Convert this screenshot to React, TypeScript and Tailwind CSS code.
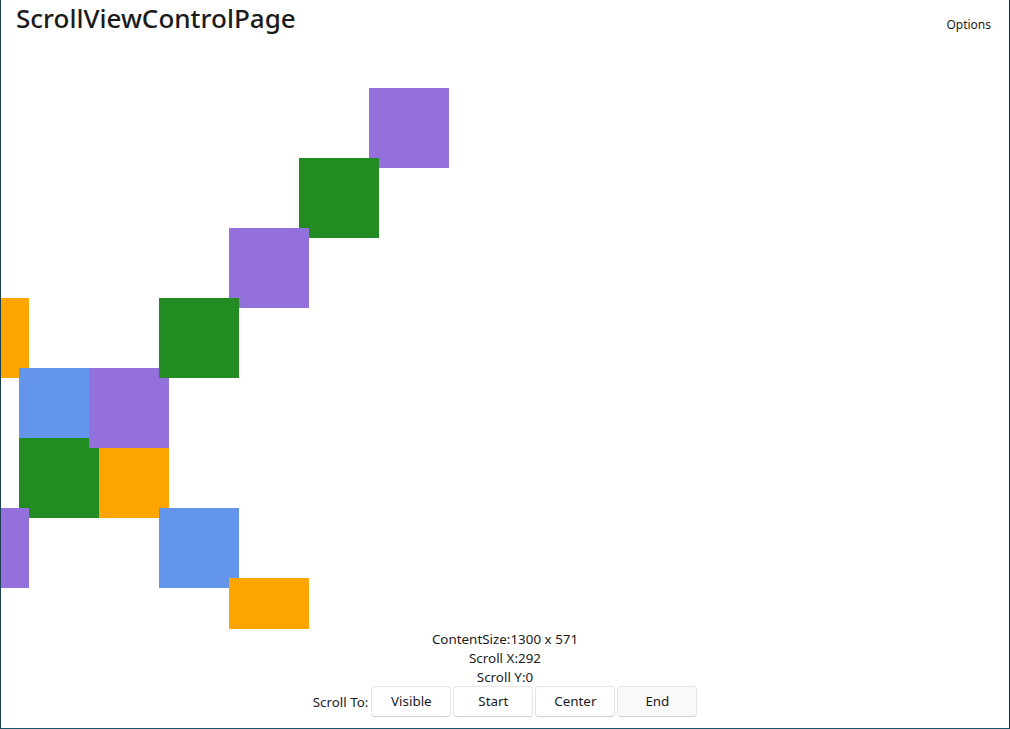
import React from "react";

type Square = { x: number; y: number; color: string };

// canvas origin is at page (1, 44)
const squares: Square[] = [
  { x: 368, y: 44, color: "bg-[#9370db]" },
  { x: 298, y: 114, color: "bg-[#228b22]" },
  { x: 228, y: 184, color: "bg-[#9370db]" },
  { x: -52, y: 254, color: "bg-[#ffa500]" },
  { x: 18, y: 324, color: "bg-[#6495ed]" },
  { x: 88, y: 394, color: "bg-[#ffa500]" },
  { x: 18, y: 394, color: "bg-[#228b22]" },
  { x: 88, y: 324, color: "bg-[#9370db]" },
  { x: 158, y: 254, color: "bg-[#228b22]" },
  { x: -52, y: 464, color: "bg-[#9370db]" },
  { x: 158, y: 464, color: "bg-[#6495ed]" },
  { x: 228, y: 534, color: "bg-[#ffa500]" },
];

const buttons = ["Visible", "Start", "Center", "End"];

export default function App() {
  return (
    <div
      className="w-[1010px] h-[729px] flex flex-col bg-white text-[#1b1b1b] border-l border-r border-b border-l-[#1c3f4f] border-r-[#1d3553] border-b-[#16566a] overflow-hidden"
      style={{ fontFamily: "'Noto Sans', 'Open Sans', sans-serif" }}
    >
      {/* Header */}
      <div className="h-[44px] flex items-start justify-between shrink-0">
        <h1 className="pl-[15px] text-[26px] leading-[36px] font-medium">
          ScrollViewControlPage
        </h1>
        <div className="pr-[18px] pt-[16px] text-[12px] leading-[18px]">Options</div>
      </div>

      {/* Scroll area */}
      <div className="relative flex-1 overflow-hidden">
        {squares.map((s, i) => (
          <div
            key={i}
            className={`absolute w-[80px] h-[80px] ${s.color}`}
            style={{ left: s.x, top: s.y }}
          />
        ))}
      </div>

      {/* Footer */}
      <div className="h-[99px] shrink-0 flex flex-col items-center pt-[1px] text-[13.4px] leading-[19px]">
        <div>ContentSize:1300 x 571</div>
        <div>Scroll X:292</div>
        <div>Scroll Y:0</div>
        <div className="flex items-center gap-[2px] -mt-[1px]">
          <span className="pr-[1px] pt-[2px]">Scroll To:</span>
          {buttons.map((b) => (
            <button
              key={b}
              className={`w-[80px] h-[31px] rounded-[4px] border border-[#e5e5e5] border-b-[#d0d0d0] ${
                b === "End" ? "bg-[#f9f9f9]" : "bg-white"
              } text-[13.4px]`}
            >
              {b}
            </button>
          ))}
        </div>
      </div>
    </div>
  );
}
